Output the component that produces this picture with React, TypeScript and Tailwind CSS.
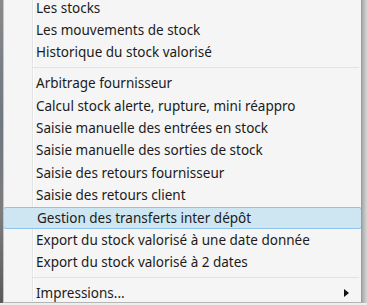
const groups: { label: string; active?: boolean; submenu?: boolean }[][] = [
  [{ label: 'Les stocks' }, { label: 'Les mouvements de stock' }, { label: 'Historique du stock valorisé' }],
  [
    { label: 'Arbitrage fournisseur' },
    { label: 'Calcul stock alerte, rupture, mini réappro' },
    { label: 'Saisie manuelle des entrées en stock' },
    { label: 'Saisie manuelle des sorties de stock' },
    { label: 'Saisie des retours fournisseur' },
    { label: 'Saisie des retours client' },
    { label: 'Gestion des transferts inter dépôt', active: true },
    { label: 'Export du stock valorisé à une date donnée' },
    { label: 'Export du stock valorisé à 2 dates' },
  ],
  [{ label: 'Impressions...', submenu: true }],
];

const MenuItem = ({ label, active, submenu }: { label: string; active?: boolean; submenu?: boolean }) => (
  <div
    className={
      'flex items-center h-[22.4px] pl-[32px] pr-[14px] ' +
      (active ? 'bg-[#cee6f1] border border-[#8fc3ea] rounded-[3px] -mx-[1px] pl-[33px]' : '')
    }
  >
    <span className="flex-1 whitespace-nowrap">{label}</span>
    {submenu && (
      <svg width="5" height="8" viewBox="0 0 5 8" className="mr-[-2px]">
        <polygon points="0,0 5,4 0,8" fill="#111" />
      </svg>
    )}
  </div>
);

const App = () => {
  return (
    <div className="w-[367px] h-[305px] flex flex-col overflow-hidden bg-[#e9e9e9]">
      <div className="flex h-[303px]">
        <div className="w-[3px] bg-[linear-gradient(to_bottom,#8a8a8a,#6f7780_40%,#7d7d7d_70%,#5a5a5a)]" />
        <div className="w-[359px] border-l border-r border-b border-l-[#c4c4c4] border-r-[#9a9a9a] border-b-[#b5b5b5] overflow-hidden bg-[#f5f5f5] bg-[linear-gradient(to_right,#f5f5f5_28px,#e2e3e3_28px,#e2e3e3_29px,#ffffff_29px,#ffffff_30px,#f5f5f5_30px)]">
          <div
            className="flex flex-col mt-[-3.5px] text-[13.5px] text-[#1b1b1b]"
            style={{ fontFamily: '"Noto Sans", "Open Sans", sans-serif' }}
          >
            {groups.map((g, gi) => (
              <div key={gi}>
                {gi > 0 && (
                  <div className="h-[8.5px] flex items-center pl-[29px] pr-[2px]">
                    <div className="h-px w-full bg-[#dde3e7]" />
                  </div>
                )}
                {g.map((it) => (
                  <MenuItem key={it.label} {...it} />
                ))}
              </div>
            ))}
          </div>
        </div>
        <div className="flex-1 bg-[linear-gradient(to_right,#a9a9a9,#d6d6d6)]" />
      </div>
      <div className="flex-1 bg-[#eeeeee]" />
    </div>
  );
};

export default App;
